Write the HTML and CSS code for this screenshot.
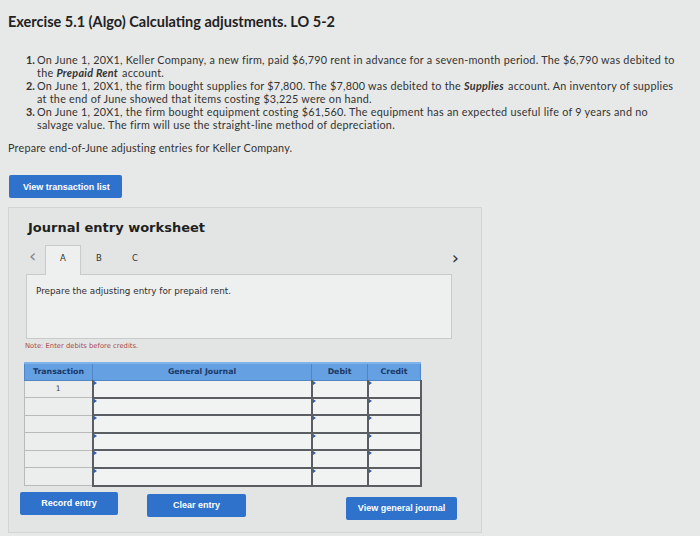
FILE: index.html
```html
<!DOCTYPE html>
<html>
<head>
<meta charset="utf-8">
<link rel="stylesheet" href="styles.css">
</head>
<body>
<div class="page">
  <h1 class="title">Exercise 5.1 (Algo) Calculating adjustments. LO 5-2</h1>
  <ol class="items">
    <li><span class="num">1.</span><span class="txt">On June 1, 20X1, Keller Company, a new firm, paid $6,790 rent in advance for a seven-month period. The $6,790 was debited to the <b class="acct">Prepaid Rent</b> account.</span></li>
    <li><span class="num">2.</span><span class="txt">On June 1, 20X1, the firm bought supplies for $7,800. The $7,800 was debited to the <b class="acct">Supplies</b> account. An inventory of supplies at the end of June showed that items costing $3,225 were on hand.</span></li>
    <li><span class="num">3.</span><span class="txt">On June 1, 20X1, the firm bought equipment costing $61,560. The equipment has an expected useful life of 9 years and no salvage value. The firm will use the straight-line method of depreciation.</span></li>
  </ol>
  <p class="prepare">Prepare end-of-June adjusting entries for Keller Company.</p>
  <button class="btn btn-list">View transaction list</button>

  <section class="panel">
    <h2 class="ws-title">Journal entry worksheet</h2>
    <div class="tabs">
      <span class="arrow left">&lsaquo;</span>
      <span class="tab active">A</span>
      <span class="tab">B</span>
      <span class="tab">C</span>
      <span class="spacer"></span>
      <span class="arrow right">&rsaquo;</span>
    </div>
    <div class="prompt">Prepare the adjusting entry for prepaid rent.</div>
    <div class="note">Note: Enter debits before credits.</div>
    <table class="journal">
      <colgroup><col class="c1"><col class="c2"><col class="c3"><col class="c4"></colgroup>
      <thead><tr><th>Transaction</th><th>General Journal</th><th>Debit</th><th>Credit</th></tr></thead>
      <tbody>
        <tr><td class="tr">1</td><td class="in"></td><td class="in"></td><td class="in"></td></tr>
        <tr><td class="tr"></td><td class="in"></td><td class="in"></td><td class="in"></td></tr>
        <tr><td class="tr"></td><td class="in"></td><td class="in"></td><td class="in"></td></tr>
        <tr><td class="tr"></td><td class="in"></td><td class="in"></td><td class="in"></td></tr>
        <tr><td class="tr"></td><td class="in"></td><td class="in"></td><td class="in"></td></tr>
        <tr><td class="tr"></td><td class="in"></td><td class="in"></td><td class="in"></td></tr>
      </tbody>
    </table>
    <div class="actions">
      <button class="btn btn-record">Record entry</button>
      <button class="btn btn-clear">Clear entry</button>
      <button class="btn btn-view">View general journal</button>
    </div>
  </section>
</div>
</body>
</html>
```

FILE: styles.css
```css
* { box-sizing: border-box; }
html, body { margin: 0; padding: 0; }
body {
  width: 700px;
  height: 536px;
  overflow: hidden;
  background: #e7e9e8;
  font-family: Lato, "Open Sans", sans-serif;
  color: #2a2a2a;
}
.page { padding: 13px 0 0 8px; }
.title {
  margin: 0;
  font-family: Lato, sans-serif;
  font-weight: 700;
  font-size: 14.5px;
  line-height: 18px;
  color: #222;
}
.items {
  list-style: none;
  margin: 22px 0 0 0;
  padding: 0 0 0 18px;
  width: 671px;
  font-size: 10.8px;
  letter-spacing: 0.26px;
  line-height: 13px;
  color: #333;
}
.items li { display: flex; }
.acct {
  display: inline-block;
  line-height: 13px;
  height: 13px;
  font-style: italic;
  font-weight: 700;
  padding-right: 1px;
}
.num { width: 11px; flex: none; font-weight: 700; font-size: 10.8px; letter-spacing: 0; }
.txt { flex: 1; }
.prepare {
  margin: 10px 0 0 0;
  font-size: 10.8px;
  letter-spacing: 0.2px;
  line-height: 13px;
  color: #333;
}
.btn {
  display: block;
  border: none;
  border-radius: 2px;
  background: #2e72cc;
  color: #fff;
  font-family: "Liberation Sans", Arial, sans-serif;
  font-weight: 700;
  font-size: 9px;
  height: 23px;
  padding: 0;
}
.btn-list {
  margin: 21px 0 0 1px;
  width: 113px;
  text-align: left;
  padding-left: 14px;
}
.panel {
  margin-top: 9px;
  width: 474px;
  height: 326px;
  background: #e3e5e4;
  border: 1px solid #d3d5d4;
  padding: 0 0 0 0;
}
.ws-title {
  margin: 11px 0 0 19px;
  font-family: "DejaVu Sans", Verdana, sans-serif;
  font-weight: 700;
  font-size: 13px;
  line-height: 18px;
  color: #1f1f1f;
}
.tabs {
  display: flex;
  align-items: flex-end;
  margin: 8px 0 0 17px;
  width: 427px;
  height: 29px;
  font-family: "DejaVu Sans", Verdana, sans-serif;
  font-size: 8.5px;
  color: #333;
}
.tab {
  width: 36px;
  height: 29px;
  text-align: center;
  line-height: 24px;
  border: 1px solid transparent;
  border-bottom: none;
}
.tab.active {
  background: #eef0ef;
  border-color: #c9cbca;
  margin-bottom: -1px;
  height: 30px;
  position: relative;
}
.arrow {
  align-self: flex-start;
  font-size: 18px;
  line-height: 22px;
  color: #888;
  width: 19px;
  padding-left: 3px;
}
.arrow.right { color: #333; width: auto; margin-right: -6px; margin-top: 2px; }
.spacer { flex: 1; }
.prompt {
  margin-left: 17px;
  width: 426px;
  height: 65px;
  background: #eef0ef;
  border: 1px solid #c9cbca;
  padding: 11px 0 0 9px;
  font-family: "DejaVu Sans", Verdana, sans-serif;
  font-size: 8.8px;
  color: #2e2e2e;
}
.note {
  margin: 1px 0 0 16px;
  font-family: "DejaVu Sans", Verdana, sans-serif;
  font-size: 6.8px;
  line-height: 12px;
  color: #a8484e;
}
.journal {
  margin: 10px 0 0 15px;
  width: 396px;
  border-collapse: collapse;
  table-layout: fixed;
  font-family: "DejaVu Sans", Verdana, sans-serif;
}
.c1 { width: 68px; }
.c2 { width: 219px; }
.c3 { width: 56px; }
.c4 { width: 53px; }
.journal th {
  height: 17px;
  background: #64a0e2;
  color: #1b3866;
  font-size: 7.8px;
  font-weight: 700;
  border: 1px solid #4f86c6;
  border-top: 2px solid #7fb3ea;
  padding: 0;
}
.journal td {
  height: 17.6px;
  padding: 0;
}
.journal td.tr {
  background: #eceeed;
  border: 1px solid #b9bbba;
  text-align: center;
  font-size: 7.5px;
  color: #444;
}
.journal td.in {
  background: #f1f3f2;
  border: 2px solid #5a5d62;
  border-top-width: 1px;
  border-bottom-width: 2px;
  position: relative;
}
.journal td.in::before {
  content: "";
  position: absolute;
  left: 0;
  top: 0;
  border-left: 3px solid #2e5fb0;
  border-top: 2px solid transparent;
  border-bottom: 2px solid transparent;
}
.actions {
  display: flex;
  align-items: flex-start;
  margin: 5px 0 0 11px;
}
.btn-record { width: 98px; }
.btn-clear { width: 99px; margin-left: 29px; margin-top: 2px; }
.btn-view { width: 111px; margin-left: 100px; margin-top: 5px; }
```
